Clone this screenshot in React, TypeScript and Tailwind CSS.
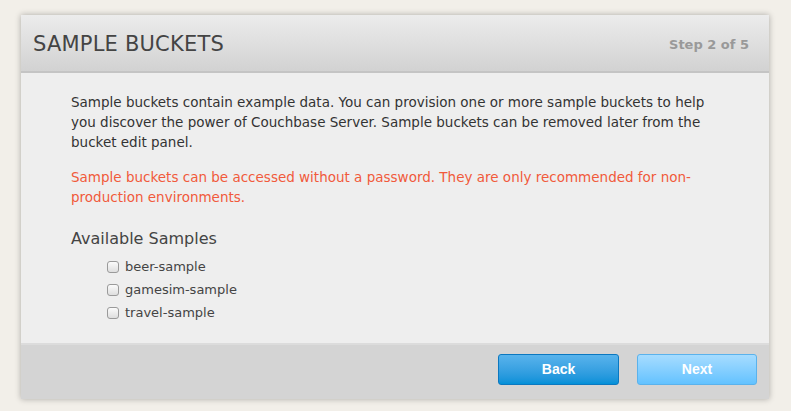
const SAMPLES = ["beer-sample", "gamesim-sample", "travel-sample"]

export default function App() {
    return (
        <div className="min-h-screen w-full bg-[#f2efe9] pt-[15px] pl-[21px]" style={{ fontFamily: '"DejaVu Sans", Verdana, sans-serif' }}>
            <div className="w-[748px] shadow-[0_0_6px_rgba(0,0,0,0.3)]">
                {/* Header */}
                <div className="flex h-[58px] items-center justify-between border-b-2 border-[#c4c4c4] bg-gradient-to-b from-[#ececec] to-[#d2d2d2] pl-[12px] pr-[20px] pt-[3px]">
                    <h1 className="text-[21px] font-normal text-[#444444] tracking-[0.2px]">SAMPLE BUCKETS</h1>
                    <span className="text-[13px] font-bold text-[#999999]">Step 2 of 5</span>
                </div>

                {/* Body */}
                <div className="h-[270px] bg-[#eeeeee] pl-[50px] pt-[19px]">
                    <p className="w-[645px] text-[13.5px] leading-[20px] text-[#333333]">
                        Sample buckets contain example data. You can provision one or more sample buckets to help
                        you discover the power of Couchbase Server. Sample buckets can be removed later from the
                        bucket edit panel.
                    </p>
                    <p className="mt-[15px] w-[645px] text-[13.5px] leading-[20px] text-[#f15a3b]">
                        Sample buckets can be accessed without a password. They are only recommended for non-production environments.
                    </p>
                    <h2 className="mt-[20px] text-[16px] font-normal leading-[24px] text-[#444444]">Available Samples</h2>
                    <ul className="mt-[8px] flex flex-col gap-[7px] pl-[36px]">
                        {SAMPLES.map((name) => (
                            <li key={name} className="flex h-[16px] items-center gap-[6px] text-[13px] text-[#444444]">
                                <span className="h-[12px] w-[12px] rounded-[3px] border border-[#9a9a9a] bg-gradient-to-b from-[#fbfbfb] to-[#dedede]" />
                                {name}
                            </li>
                        ))}
                    </ul>
                </div>

                {/* Footer */}
                <div className="flex h-[56px] items-start justify-end gap-[18px] border-t-2 border-[#dcdcdc] bg-[#d4d4d4] pr-[12px] pt-[9px]">
                    <button
                        className="h-[31px] w-[121px] rounded-[3px] border border-[#0b78c0] bg-gradient-to-b from-[#58b3ec] to-[#0090d8] text-[14px] font-bold text-white"
                        style={{ fontFamily: '"Liberation Sans", Arial, sans-serif' }}
                    >
                        Back
                    </button>
                    <button
                        className="h-[31px] w-[120px] rounded-[3px] border border-[#5ab2ec] bg-gradient-to-b from-[#a6dcff] to-[#62c2ff] text-[14px] font-bold text-white"
                        style={{ fontFamily: '"Liberation Sans", Arial, sans-serif' }}
                    >
                        Next
                    </button>
                </div>
            </div>
        </div>
    )
}
